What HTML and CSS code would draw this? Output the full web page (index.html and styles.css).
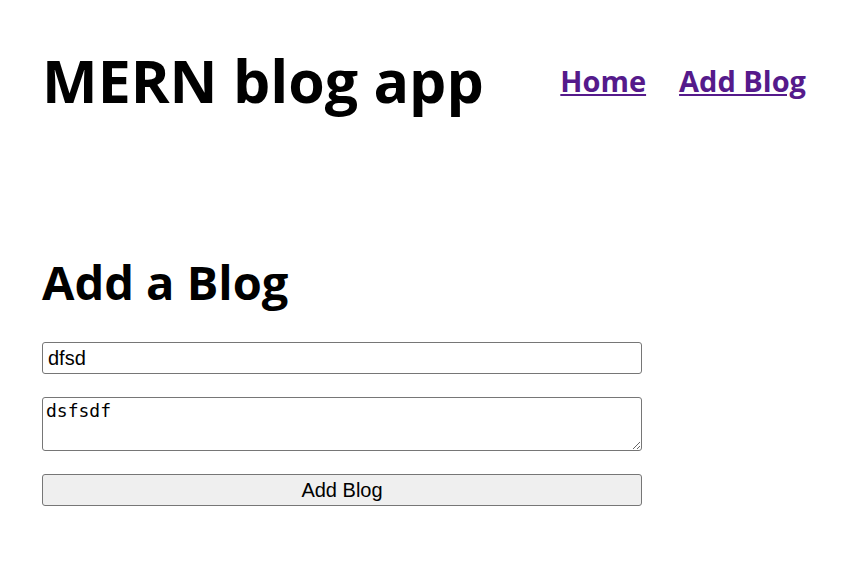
FILE: index.html
```html
<!DOCTYPE html>
<html>
<head>
<meta charset="utf-8">
<link rel="stylesheet" href="styles.css">
</head>
<body>
<div class="page">
  <header class="header">
    <h1 class="title">MERN blog app</h1>
    <nav class="nav">
      <a class="nav-link" href="#">Home</a>
      <a class="nav-link" href="#">Add Blog</a>
    </nav>
  </header>
  <main class="create">
    <h2 class="heading">Add a Blog</h2>
    <form class="form">
      <input class="field" type="text" value="dfsd">
      <textarea class="area">dsfsdf</textarea>
      <button class="btn" type="button">Add Blog</button>
    </form>
  </main>
</div>
</body>
</html>
```
FILE: styles.css
```css
html, body {
  margin: 0;
  background: #fff;
}
.page {
  padding: 0 40px 0 42px;
  font-family: "Open Sans", sans-serif;
  color: #000;
}
.header {
  display: flex;
  justify-content: space-between;
  align-items: center;
  padding-top: 40px;
}
.title {
  margin: 0;
  font-size: 59px;
  font-weight: 700;
  line-height: 80px;
}
.nav {
  display: flex;
  gap: 33px;
}
.nav-link {
  color: #551a8b;
  font-weight: 700;
  font-size: 29px;
  text-decoration: underline;
}
.create {
  padding-top: 132px;
  width: 600px;
}
.heading {
  margin: 0 0 30px;
  font-size: 47px;
  font-weight: 700;
  line-height: 60px;
}
.form {
  display: flex;
  flex-direction: column;
  gap: 23px;
}
.field {
  box-sizing: border-box;
  width: 600px;
  height: 32px;
  margin: 0;
  padding: 1px 5px;
  font-family: "Liberation Sans", Arial, sans-serif;
  font-size: 20px;
  border: 1px solid #767676;
  border-radius: 3px;
}
.area {
  box-sizing: border-box;
  width: 600px;
  height: 54px;
  margin: 0;
  padding: 2px 3px;
  font-family: "DejaVu Sans Mono", monospace;
  font-size: 18px;
  border: 1px solid #767676;
  border-radius: 3px;
  resize: vertical;
}
.btn {
  box-sizing: border-box;
  width: 600px;
  height: 32px;
  margin: 0;
  font-family: "Liberation Sans", Arial, sans-serif;
  font-size: 20px;
  background: #efefef;
  border: 1px solid #767676;
  border-radius: 3px;
  color: #000;
}
```
